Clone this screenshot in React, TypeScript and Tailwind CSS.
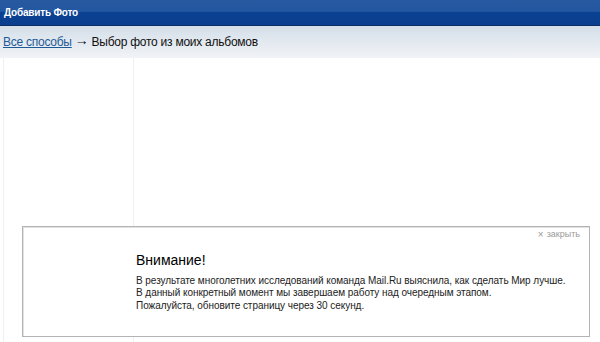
import React from "react";

const lines = [
  "В результате многолетних исследований команда Mail.Ru выяснила, как сделать Мир лучше.",
  "В данный конкретный момент мы завершаем работу над очередным этапом.",
  "Пожалуйста, обновите страницу через 30 секунд.",
];

export default function App() {
  return (
    <div className="relative w-[600px] h-[342px] overflow-hidden bg-white font-['Liberation_Sans',Arial,sans-serif]">
      <div className="h-[26px] flex items-center pl-[4px] border-b border-[#0a2e66] bg-[linear-gradient(to_bottom,#2659a0_0%,#2357a0_45%,#0b4192_50%,#0a3f8f_100%)]">
        <span className="text-white text-[10px] font-bold tracking-[-0.2px]">Добавить Фото</span>
      </div>

      <div className="h-[32px] flex items-center px-[3px] text-[12px] tracking-[-0.25px] text-[#111] bg-[linear-gradient(to_bottom,#d4dfe9,#f1f3f6)]">
        <a href="#" className="text-[#1d5a96] underline decoration-[#1d5a96]">
          Все способы
        </a>
        <span className="mx-[3px] text-[14px] leading-[14px] -translate-y-[2px]">→</span>
        <span>Выбор фото из моих альбомов</span>
      </div>

      <div className="flex h-[284px]">
        <div className="ml-[3px] w-[131px] border-l border-r border-[#f0f0f0]" />
        <div className="flex-1" />
      </div>

      <div className="absolute left-[22px] top-[226px] w-[568px] h-[111px] bg-white border border-[#b4b4b4] shadow-[inset_1px_1px_0_#e2e2e2]">
        <div className="flex justify-end pr-[9px] pt-[1px]">
          <span className="text-[9px] text-[#9a9a9a] flex items-center gap-[3px]">
            <span className="text-[10px] leading-none">×</span>закрыть
          </span>
        </div>
        <div className="pl-[113px] pt-[10px]">
          <div className="text-[14px] text-black leading-[16px]">Внимание!</div>
          <div className="mt-[7px] text-[10px] leading-[12.5px] tracking-[-0.05px] text-[#222]">
            {lines.map((l, i) => (
              <div key={i}>{l}</div>
            ))}
          </div>
        </div>
      </div>
    </div>
  );
}
